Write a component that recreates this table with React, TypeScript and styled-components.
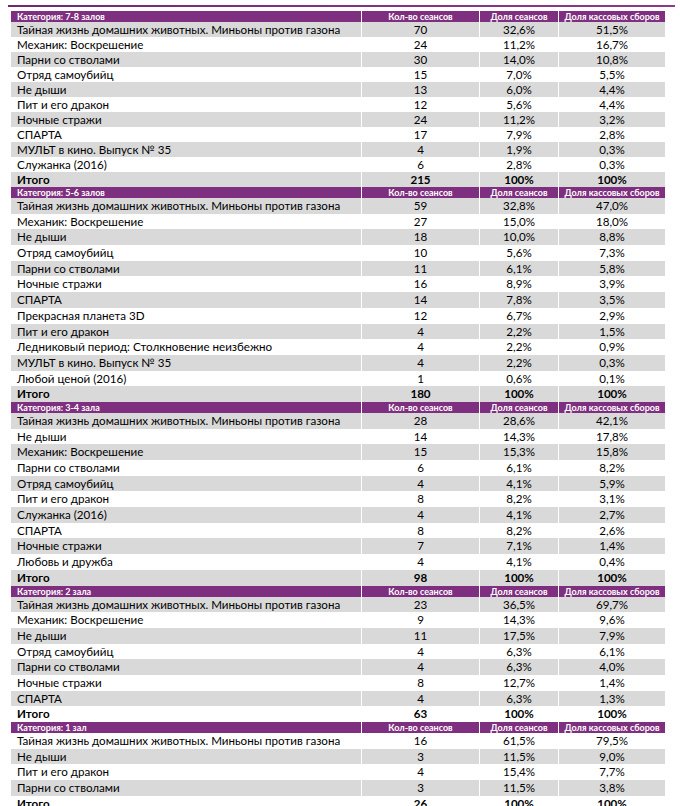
import React from "react";
import styled, { createGlobalStyle } from "styled-components";

const Global = createGlobalStyle`
  html, body { margin: 0; padding: 0; background: #fff; }
  body { font-family: "Lato", "Liberation Sans", sans-serif; color: #000; }
`;

const PURPLE = "#7f2f7f";
const GRAY = "#d9d9d9";

const Page = styled.div`
  padding: 5px 0 0 8px;
  width: 667px;
`;

const TopRule = styled.div`
  height: 2px;
  background: linear-gradient(to right, #6b2a6e, #7f2f7f 40%, #8a3a86);
  margin-bottom: 4px;
`;

const Table = styled.div`
  display: flex;
  flex-direction: column;
  width: 654px;
  margin-left: 3px;
`;

const Row = styled.div<{ $h: number; $bg: string }>`
  display: grid;
  grid-template-columns: 350px 118px 79px 107px;
  height: ${(p) => p.$h}px;
  flex: none;
  background: ${(p) => p.$bg};
`;

const HeadRow = styled(Row)`
  color: #fff;
  font-weight: 700;
  font-size: 9px;
`;

const BodyRow = styled(Row)`
  font-size: 11.6px;
`;

const Cell = styled.div<{ $first?: boolean; $bold?: boolean }>`
  display: flex;
  align-items: center;
  justify-content: ${(p) => (p.$first ? "flex-start" : "center")};
  padding-left: ${(p) => (p.$first ? "6px" : "0")};
  border-left: ${(p) => (p.$first ? "none" : "1px solid #fff")};
  font-weight: ${(p) => (p.$bold ? 700 : "inherit")};
  white-space: nowrap;
  line-height: 1;
`;

type Line = [string, string, string, string];
type Group = { title: string; rowH: number; rows: Line[]; total: Line };

const T = "Тайная жизнь домашних животных. Миньоны против газона";

const groups: Group[] = [
  {
    title: "Категория: 7-8 залов",
    rowH: 15,
    rows: [
      [T, "70", "32,6%", "51,5%"],
      ["Механик: Воскрешение", "24", "11,2%", "16,7%"],
      ["Парни со стволами", "30", "14,0%", "10,8%"],
      ["Отряд самоубийц", "15", "7,0%", "5,5%"],
      ["Не дыши", "13", "6,0%", "4,4%"],
      ["Пит и его дракон", "12", "5,6%", "4,4%"],
      ["Ночные стражи", "24", "11,2%", "3,2%"],
      ["СПАРТА", "17", "7,9%", "2,8%"],
      ["МУЛЬТ в кино. Выпуск № 35", "4", "1,9%", "0,3%"],
      ["Служанка (2016)", "6", "2,8%", "0,3%"],
    ],
    total: ["Итого", "215", "100%", "100%"],
  },
  {
    title: "Категория: 5-6 залов",
    rowH: 15.7,
    rows: [
      [T, "59", "32,8%", "47,0%"],
      ["Механик: Воскрешение", "27", "15,0%", "18,0%"],
      ["Не дыши", "18", "10,0%", "8,8%"],
      ["Отряд самоубийц", "10", "5,6%", "7,3%"],
      ["Парни со стволами", "11", "6,1%", "5,8%"],
      ["Ночные стражи", "16", "8,9%", "3,9%"],
      ["СПАРТА", "14", "7,8%", "3,5%"],
      ["Прекрасная планета 3D", "12", "6,7%", "2,9%"],
      ["Пит и его дракон", "4", "2,2%", "1,5%"],
      ["Ледниковый период: Столкновение неизбежно", "4", "2,2%", "0,9%"],
      ["МУЛЬТ в кино. Выпуск № 35", "4", "2,2%", "0,3%"],
      ["Любой ценой (2016)", "1", "0,6%", "0,1%"],
    ],
    total: ["Итого", "180", "100%", "100%"],
  },
  {
    title: "Категория: 3-4 зала",
    rowH: 15.7,
    rows: [
      [T, "28", "28,6%", "42,1%"],
      ["Не дыши", "14", "14,3%", "17,8%"],
      ["Механик: Воскрешение", "15", "15,3%", "15,8%"],
      ["Парни со стволами", "6", "6,1%", "8,2%"],
      ["Отряд самоубийц", "4", "4,1%", "5,9%"],
      ["Пит и его дракон", "8", "8,2%", "3,1%"],
      ["Служанка (2016)", "4", "4,1%", "2,7%"],
      ["СПАРТА", "8", "8,2%", "2,6%"],
      ["Ночные стражи", "7", "7,1%", "1,4%"],
      ["Любовь и дружба", "4", "4,1%", "0,4%"],
    ],
    total: ["Итого", "98", "100%", "100%"],
  },
  {
    title: "Категория: 2 зала",
    rowH: 15.7,
    rows: [
      [T, "23", "36,5%", "69,7%"],
      ["Механик: Воскрешение", "9", "14,3%", "9,6%"],
      ["Не дыши", "11", "17,5%", "7,9%"],
      ["Отряд самоубийц", "4", "6,3%", "6,1%"],
      ["Парни со стволами", "4", "6,3%", "4,0%"],
      ["Ночные стражи", "8", "12,7%", "1,4%"],
      ["СПАРТА", "4", "6,3%", "1,3%"],
    ],
    total: ["Итого", "63", "100%", "100%"],
  },
  {
    title: "Категория: 1 зал",
    rowH: 15.7,
    rows: [
      [T, "16", "61,5%", "79,5%"],
      ["Не дыши", "3", "11,5%", "9,0%"],
      ["Пит и его дракон", "4", "15,4%", "7,7%"],
      ["Парни со стволами", "3", "11,5%", "3,8%"],
    ],
    total: ["Итого", "26", "100%", "100%"],
  },
];

export default function App() {
  let idx = 0;
  const out: React.ReactNode[] = [];
  groups.forEach((g, gi) => {
    idx++;
    out.push(
      <HeadRow key={`h${gi}`} $h={11} $bg={PURPLE}>
        <Cell $first>{g.title}</Cell>
        <Cell>Кол-во сеансов</Cell>
        <Cell>Доля сеансов</Cell>
        <Cell>Доля кассовых сборов</Cell>
      </HeadRow>
    );
    [...g.rows, g.total].forEach((r, ri) => {
      idx++;
      const bold = ri === g.rows.length;
      out.push(
        <BodyRow key={`r${gi}-${ri}`} $h={g.rowH} $bg={idx % 2 === 0 ? GRAY : "#fff"}>
          <Cell $first $bold={bold}>{r[0]}</Cell>
          <Cell $bold={bold}>{r[1]}</Cell>
          <Cell $bold={bold}>{r[2]}</Cell>
          <Cell $bold={bold}>{r[3]}</Cell>
        </BodyRow>
      );
    });
  });
  return (
    <>
      <Global />
      <Page>
        <TopRule />
        <Table>{out}</Table>
      </Page>
    </>
  );
}
